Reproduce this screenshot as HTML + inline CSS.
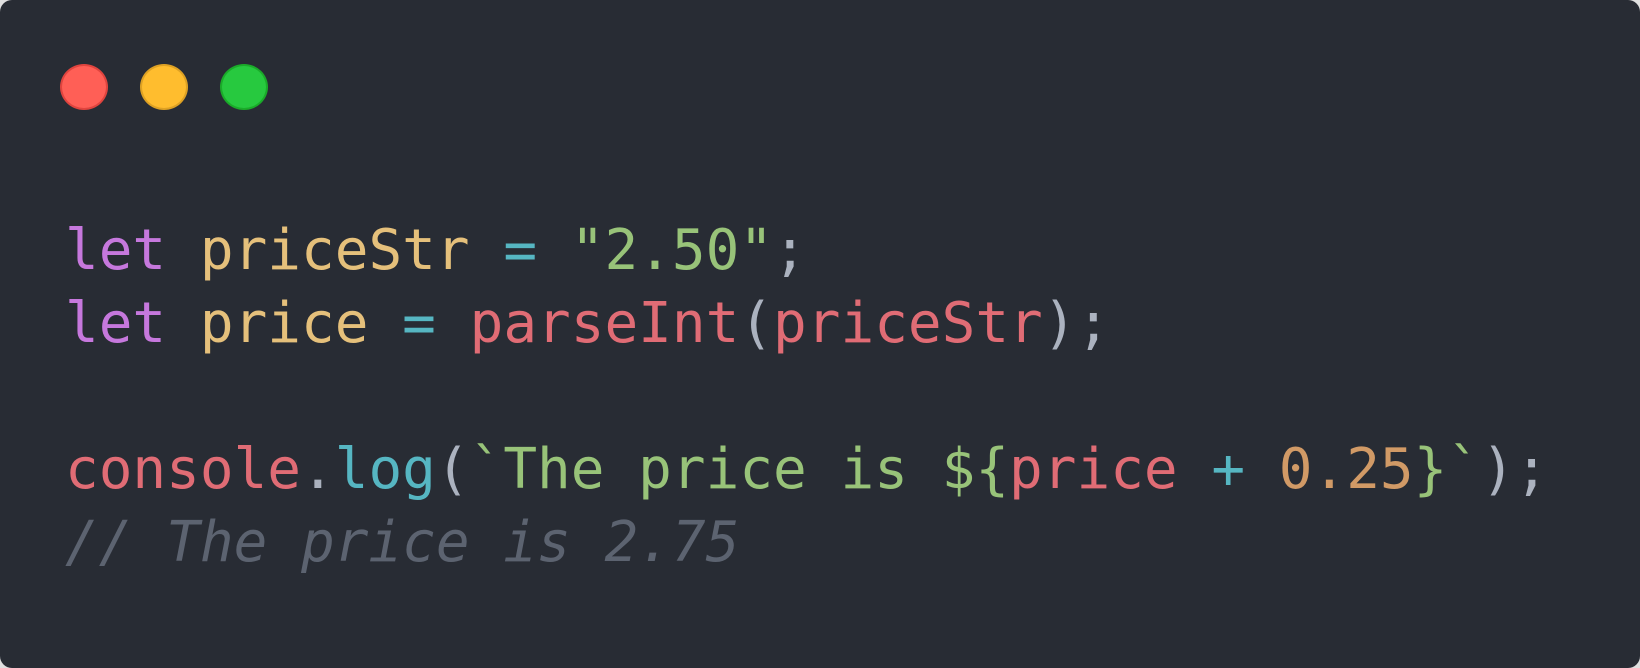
<!DOCTYPE html>
<html><head><style>
html,body{margin:0;padding:0;background:#e0e0e0;}
.win{position:absolute;left:0;top:0;width:1640px;height:668px;background:#282c34;border-radius:12px;overflow:hidden;}
.dot{position:absolute;top:64px;width:48px;height:46px;border-radius:50%;box-sizing:border-box;}
pre{position:absolute;left:65px;top:214px;margin:0;font-family:"DejaVu Sans Mono","Liberation Mono",monospace;font-size:56px;line-height:73px;color:#abb2bf;}
.k{color:#c678dd}.v{color:#e5c07b}.o{color:#56b6c2}.s{color:#98c379}.r{color:#e06c75}.n{color:#d19a66}.c{color:#5c6370;font-style:italic}
</style></head><body>
<div class="win">
<div class="dot" style="left:60px;background:#ff5f56;border:2px solid #e0443e"></div>
<div class="dot" style="left:140px;background:#ffbd2e;border:2px solid #dea123"></div>
<div class="dot" style="left:220px;background:#27c93f;border:2px solid #1aab29"></div>
<pre><span class="k">let</span> <span class="v">priceStr</span> <span class="o">=</span> <span class="s">"2.50"</span>;
<span class="k">let</span> <span class="v">price</span> <span class="o">=</span> <span class="r">parseInt</span>(<span class="r">priceStr</span>);

<span class="r">console</span>.<span class="o">log</span>(<span class="s">`The price is ${</span><span class="r">price</span> <span class="o">+</span> <span class="n">0.25</span><span class="s">}`</span>);
<span class="c">// The price is 2.75</span></pre>
</div>
</body></html>
